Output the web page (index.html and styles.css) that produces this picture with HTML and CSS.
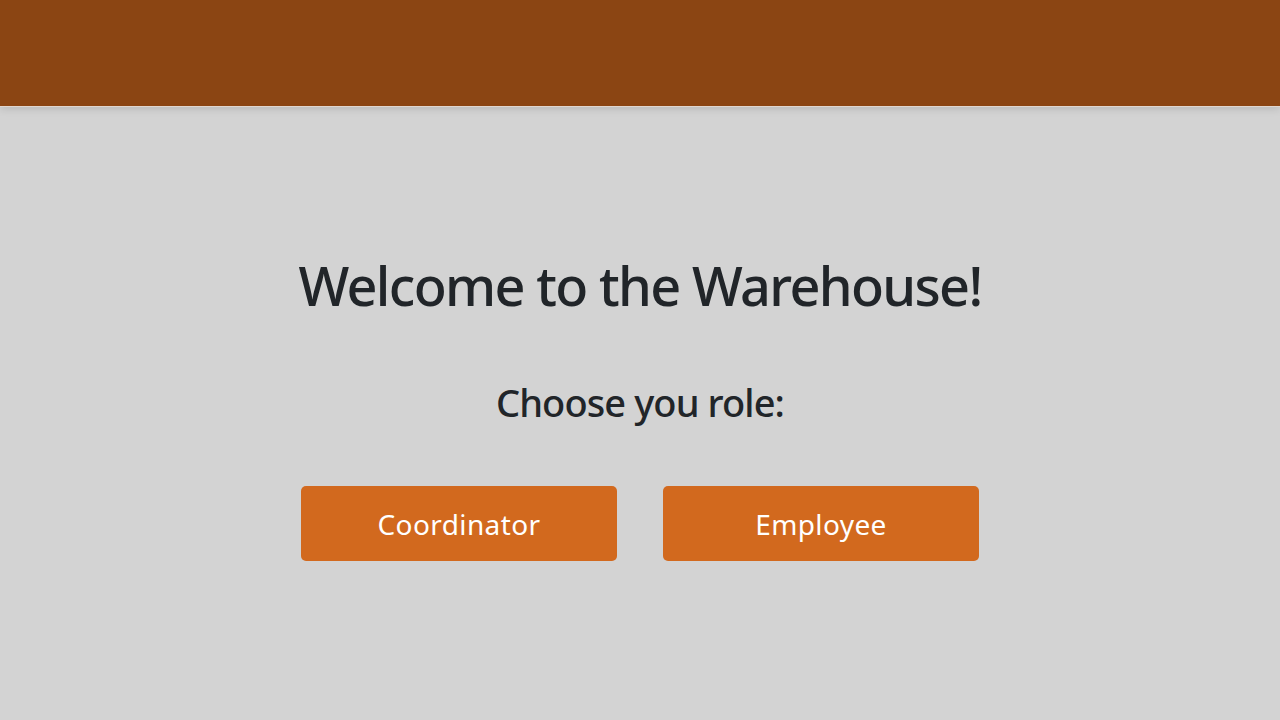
FILE: index.html
```html
<!DOCTYPE html>
<html lang="en">
<head>
<meta charset="utf-8">
<title>Warehouse</title>
<link rel="stylesheet" href="styles.css">
</head>
<body>
<header class="topbar"></header>
<main class="welcome">
  <h1 class="title">Welcome to the Warehouse!</h1>
  <h2 class="subtitle">Choose you role:</h2>
  <div class="roles">
    <button class="role-btn">Coordinator</button>
    <button class="role-btn">Employee</button>
  </div>
</main>
</body>
</html>
```
FILE: styles.css
```css
html, body {
  margin: 0;
  padding: 0;
  height: 100%;
}
body {
  background: #d3d3d3;
  font-family: "Noto Sans", "Open Sans", sans-serif;
  color: #212529;
  overflow: hidden;
}
.topbar {
  height: 106px;
  background: #8b4513;
  border-bottom: 1px solid #e0d6cf;
  box-shadow: 0 2px 8px rgba(0,0,0,0.12);
  position: relative;
}
.welcome {
  display: flex;
  flex-direction: column;
  align-items: center;
  padding-top: 146px;
}
.title {
  margin: 0;
  font-size: 54px;
  font-weight: 500;
  line-height: 1.2;
  letter-spacing: -1.65px;
}
.subtitle {
  margin: 62px 0 0;
  font-size: 38px;
  font-weight: 500;
  line-height: 1.2;
  letter-spacing: -0.9px;
}
.roles {
  display: flex;
  gap: 46px;
  margin-top: 61px;
}
.role-btn {
  width: 316px;
  height: 75px;
  background: #d2691e;
  color: #fff;
  border: none;
  border-radius: 5px;
  font-family: inherit;
  font-size: 28px;
  letter-spacing: 0.4px;
  padding: 0;
}
```
